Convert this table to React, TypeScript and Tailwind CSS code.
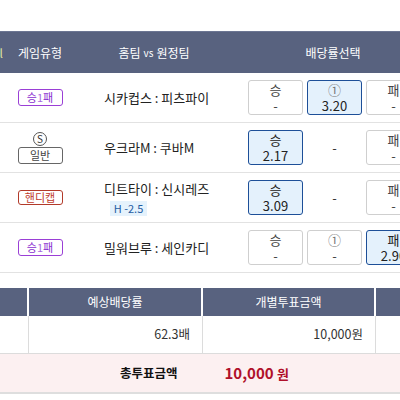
const font = { fontFamily: '"Malgun Gothic", "Noto Sans CJK KR", "Noto Sans", sans-serif' }

type Odd = { label: string; value: string; selected?: boolean; plain?: boolean }

function OddBox({ o }: { o: Odd }) {
  if (o.plain) {
    return (
      <div className="w-[55px] h-[35px] shrink-0 flex items-center justify-center text-[13px] text-[#333]">-</div>
    )
  }
  return (
    <div
      className={
        'w-[55px] h-[35px] shrink-0 rounded-[3px] border flex flex-col items-center justify-center leading-[16px] text-[13px] ' +
        (o.selected ? 'bg-[#e4f1fc] border-[#1d4f98] text-[#222]' : 'bg-white border-[#cfcfcf] text-[#444]')
      }
    >
      <span className={o.label === '①' ? 'text-[#777]' : ''}>{o.label}</span>
      <span className="whitespace-nowrap">{o.value}</span>
    </div>
  )
}

function Badge({ kind }: { kind: string }) {
  if (kind === '승1패') {
    return (
      <div className="w-[45px] h-[17px] rounded-[3px] border border-[#9a3fd6] text-[#8b2fd0] text-[11px] leading-[15px] text-center">
        승<span className="text-[#a86be0]">1</span>패
      </div>
    )
  }
  if (kind === '일반') {
    return (
      <div className="flex flex-col items-center gap-[1px]">
        <div className="w-[14px] h-[14px] rounded-full border border-[#555] text-[10px] leading-[12px] text-center text-[#333]">S</div>
        <div className="w-[45px] h-[17px] rounded-[3px] border border-[#666] text-[#444] text-[11px] leading-[15px] text-center">일반</div>
      </div>
    )
  }
  return (
    <div className="w-[45px] h-[15px] rounded-[3px] border border-[#b23a2a] text-[#c0392b] text-[11px] leading-[13px] text-center">핸디캡</div>
  )
}

const rows: { kind: string; team: string; handi?: string; odds: Odd[] }[] = [
  {
    kind: '승1패',
    team: '시카컵스 : 피츠파이',
    odds: [
      { label: '승', value: '-' },
      { label: '①', value: '3.20', selected: true },
      { label: '패', value: '-' },
    ],
  },
  {
    kind: '일반',
    team: '우크라M : 쿠바M',
    odds: [
      { label: '승', value: '2.17', selected: true },
      { label: '', value: '', plain: true },
      { label: '패', value: '-' },
    ],
  },
  {
    kind: '핸디캡',
    team: '디트타이 : 신시레즈',
    handi: 'H -2.5',
    odds: [
      { label: '승', value: '3.09', selected: true },
      { label: '', value: '', plain: true },
      { label: '패', value: '-' },
    ],
  },
  {
    kind: '승1패',
    team: '밀워브루 : 세인카디',
    odds: [
      { label: '승', value: '-' },
      { label: '①', value: '-' },
      { label: '패', value: '2.90', selected: true },
    ],
  },
]

export default function App() {
  return (
    <div className="w-[400px] h-[400px] overflow-hidden bg-white" style={font}>
      <div className="h-[31px]" />

      {/* bet table */}
      <div className="flex w-[440px] h-[42px] bg-[#58627f] text-white text-[12px] border-t border-[#6c7693]">
        <div className="w-[3px] shrink-0 overflow-hidden flex items-center justify-end">
          <span className="whitespace-nowrap text-[#dfe3a0]">l</span>
        </div>
        <div className="w-[74px] shrink-0 flex items-center justify-center">게임유형</div>
        <div className="w-[154px] shrink-0 flex items-center justify-center">
          홈팀 <span className="text-[10px] mx-[3px]">vs</span> 원정팀
        </div>
        <div className="w-[204px] shrink-0 flex items-center justify-center">배당률선택</div>
      </div>

      {rows.map((r, i) => (
        <div key={i} className="flex w-[440px] h-[50px] border-b border-[#e2e2e2]">
          <div className="w-[3px] shrink-0" />
          <div className="w-[74px] shrink-0 flex items-center justify-center">
            <Badge kind={r.kind} />
          </div>
          <div className="w-[154px] shrink-0 flex flex-col justify-center pl-[27px] text-[13px] text-[#222]">
            <div className="whitespace-nowrap">{r.team}</div>
            {r.handi && (
              <div className="mt-[2px] ml-[6px] w-[37px] h-[15px] bg-[#e5f2fc] text-[#1f5ca3] text-[11px] leading-[15px] text-center">
                {r.handi}
              </div>
            )}
          </div>
          <div className="w-[204px] shrink-0 flex items-center gap-[4px] pl-[17px]">
            {r.odds.map((o, j) => (
              <OddBox key={j} o={o} />
            ))}
          </div>
        </div>
      ))}

      <div className="h-[15px]" />

      {/* summary table */}
      <div className="flex h-[28px] bg-[#58627f] text-white text-[12px]">
        <div className="w-[29px] shrink-0 border-r-2 border-white" />
        <div className="w-[174px] shrink-0 border-r-2 border-white flex items-center justify-center">예상배당률</div>
        <div className="w-[173px] shrink-0 border-r-2 border-white flex items-center justify-center">개별투표금액</div>
        <div className="flex-1" />
      </div>
      <div className="flex h-[38px] border-b border-[#dcdcdc] text-[12.5px] text-[#333]">
        <div className="w-[29px] shrink-0 border-r border-[#dcdcdc]" />
        <div className="w-[174px] shrink-0 border-r border-[#dcdcdc] flex items-center justify-end pr-[12px]">62.3배</div>
        <div className="w-[173px] shrink-0 border-r border-[#dcdcdc] flex items-center justify-end pr-[12px]">10,000원</div>
        <div className="flex-1" />
      </div>
      <div className="flex items-center h-[40px] bg-[#fcf0f1] border-b-2 border-[#dedede]">
        <div className="w-[120px] shrink-0" />
        <div className="text-[12.5px] font-bold text-[#111]">총투표금액</div>
        <div className="ml-[47px] text-[15px] font-bold text-[#b0102a]">
          10,000 <span className="text-[13px]">원</span>
        </div>
      </div>
    </div>
  )
}
